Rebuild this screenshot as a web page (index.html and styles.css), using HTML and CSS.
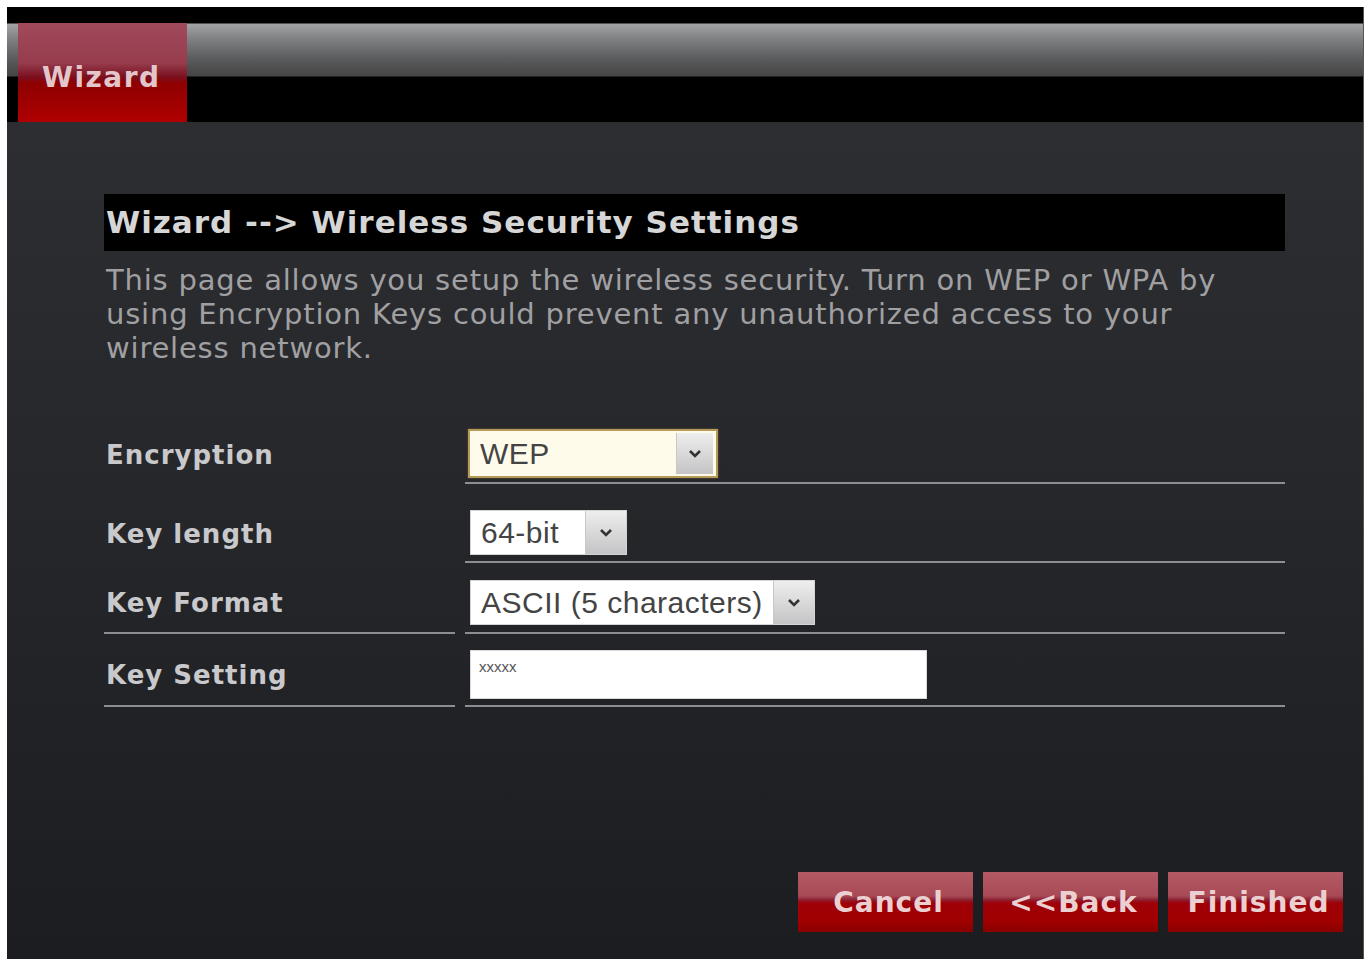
FILE: index.html
```html
<!DOCTYPE html>
<html lang="en">
<head>
    <meta charset="UTF-8">
    <title>Wizard - Wireless Security Settings</title>
    <link rel="stylesheet" href="styles.css">
</head>
<body>

<div class="frame">
    <!-- Barra superior com a aba -->
    <div class="topbar">
        <div class="tab">Wizard</div>
    </div>

    <div class="content">
        <h1 class="title">Wizard --&gt; Wireless Security Settings</h1>
        <p class="desc">This page allows you setup the wireless security. Turn on WEP or WPA by using Encryption Keys could prevent any unauthorized access to your wireless network.</p>

        <form class="settings">
            <div class="row row-enc">
                <label class="lbl" for="enc">Encryption</label>
                <div class="field">
                    <div class="sel sel-focus sel-enc">
                        <select id="enc"><option>WEP</option></select>
                        <span class="arrow"><svg width="14" height="10" viewBox="0 0 14 10"><path d="M2 2 L7 7 L12 2" fill="none" stroke="#333" stroke-width="2.6"/></svg></span>
                    </div>
                </div>
            </div>

            <div class="row row-len">
                <label class="lbl" for="len">Key length</label>
                <div class="field">
                    <div class="sel sel-len">
                        <select id="len"><option>64-bit</option></select>
                        <span class="arrow"><svg width="14" height="10" viewBox="0 0 14 10"><path d="M2 2 L7 7 L12 2" fill="none" stroke="#333" stroke-width="2.6"/></svg></span>
                    </div>
                </div>
            </div>

            <div class="row row-fmt">
                <label class="lbl lined" for="fmt">Key Format</label>
                <div class="field">
                    <div class="sel sel-fmt">
                        <select id="fmt"><option>ASCII (5 characters)</option></select>
                        <span class="arrow"><svg width="14" height="10" viewBox="0 0 14 10"><path d="M2 2 L7 7 L12 2" fill="none" stroke="#333" stroke-width="2.6"/></svg></span>
                    </div>
                </div>
            </div>

            <div class="row row-key">
                <label class="lbl lined" for="key">Key Setting</label>
                <div class="field">
                    <input class="keyinput" type="text" id="key" value="xxxxx">
                </div>
            </div>
        </form>

        <div class="buttons">
            <button type="button" class="btn">Cancel</button>
            <button type="button" class="btn">&lt;&lt;Back</button>
            <button type="button" class="btn">Finished</button>
        </div>
    </div>
</div>

</body>
</html>
```

FILE: styles.css
```css
/* Estilo Global */
body {
    margin: 0;
    padding: 0;
    background-color: #fff;
    font-family: "DejaVu Sans", Verdana, sans-serif;
}

.frame {
    margin: 7px 0 0 7px;
    width: 1356px;
    height: 952px;
    display: flex;
    flex-direction: column;
    background-color: #1c1d21;
    border-right: 1px solid #555;
}

/* Barra superior */
.topbar {
    height: 115px;
    padding-left: 11px;
    background: linear-gradient(to bottom,
        #000 0, #000 16px,
        #a2a3a4 17px, #7b7c7e 34px, #5a5b5d 52px, #444 69px,
        #000 70px, #000 115px);
    display: flex;
    align-items: flex-end;
}

.tab {
    width: 169px;
    height: 99px;
    box-sizing: border-box;
    padding-top: 38px;
    padding-left: 24px;
    background: linear-gradient(to bottom,
        #a04a5c 0, #963c4d 40px, #7a1020 54px, #8e0000 60px, #a80000 90px, #b00000 99px);
    color: #e3c6ca;
    font-weight: bold;
    font-size: 28px;
    letter-spacing: 1.5px;
}

/* Area de conteudo */
.content {
    flex: 1;
    padding: 72px 78px 0 97px;
    background: linear-gradient(to bottom, #2d2e32 0, #26272b 45%, #1b1d20 100%);
    display: flex;
    flex-direction: column;
}

.title {
    margin: 0;
    height: 57px;
    line-height: 57px;
    padding-left: 2px;
    background-color: #000;
    color: #d6d6d6;
    font-size: 31px;
    font-weight: bold;
    letter-spacing: 1px;
}

.desc {
    margin: 12px 0 0 2px;
    max-width: 1150px;
    font-size: 29px;
    line-height: 34px;
    letter-spacing: 0.8px;
    color: #a0a0a2;
}

/* Formulario */
.settings {
    margin-top: 64px;
    display: flex;
    flex-direction: column;
}

.row {
    display: grid;
    grid-template-columns: 351px 820px;
    column-gap: 10px;
}

.lbl {
    display: flex;
    align-items: center;
    padding-left: 2px;
    color: #c9c9cb;
    font-weight: bold;
    font-size: 26px;
    letter-spacing: 1px;
}

.lbl.lined {
    border-bottom: 2px solid #8d8e90;
}

.field {
    border-bottom: 2px solid #8d8e90;
    padding-left: 3px;
}

.row-len .field { padding-left: 5px; }
.row-fmt .field { padding-left: 5px; }
.row-key .field { padding-left: 5px; }

.row-enc > * { padding-top: 0; padding-bottom: 4px; }
.row-len > * { padding-top: 26px; padding-bottom: 6px; }
.row-fmt > * { padding-top: 17px; padding-bottom: 7px; }
.row-key > * { padding-top: 16px; padding-bottom: 6px; }

.sel {
    display: flex;
    height: 45px;
    box-sizing: border-box;
    background-color: #fff;
    border: 1px solid #d4d4d4;
}

.sel select {
    flex: 1;
    min-width: 0;
    -webkit-appearance: none;
    appearance: none;
    border: none;
    outline: none;
    background: transparent;
    padding: 0 0 0 10px;
    font-family: "Liberation Sans", Arial, sans-serif;
    font-size: 30px;
    letter-spacing: 0.5px;
    color: #444;
}

.sel .arrow {
    width: 40px;
    display: flex;
    align-items: center;
    justify-content: center;
    border-left: 1px solid #c8c8c8;
    background: linear-gradient(to bottom, #eeeeee, #c4c4c6);
}

.sel-focus {
    height: 49px;
    border: 2px solid #b69a5a;
    background-color: #fffbea;
    box-shadow: 0 0 2px #6a5a30;
}

.sel-focus .arrow {
    margin: 2px 3px 2px 0;
    width: 36px;
}

.sel-enc { width: 250px; }
.sel-len { width: 157px; }
.sel-fmt { width: 345px; }

.keyinput {
    display: block;
    width: 457px;
    height: 49px;
    box-sizing: border-box;
    border: 1px solid #d8d8d8;
    padding: 0 0 16px 8px;
    font-family: "Liberation Sans", Arial, sans-serif;
    font-size: 15px;
    color: #555;
    outline: none;
}

/* Botoes */
.buttons {
    margin-top: auto;
    margin-bottom: 27px;
    margin-right: -58px;
    display: flex;
    justify-content: flex-end;
    gap: 10px;
}

.btn {
    width: 175px;
    height: 60px;
    border: none;
    padding: 0 0 0 6px;
    background: linear-gradient(to bottom,
        #b35a64 0, #a84a56 24px, #8c2030 28px, #9e0008 31px, #a00000 50px, #880000 60px);
    color: #ebcfd1;
    font-family: "DejaVu Sans", Verdana, sans-serif;
    font-weight: bold;
    font-size: 28px;
    letter-spacing: 1px;
    cursor: pointer;
}
```
